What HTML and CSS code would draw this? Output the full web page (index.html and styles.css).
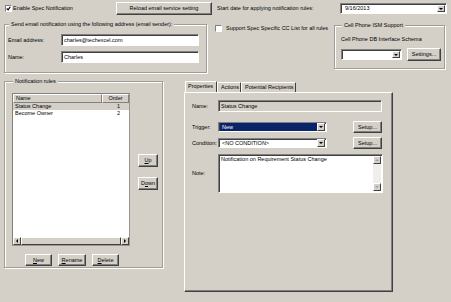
FILE: index.html
```html
<!DOCTYPE html>
<html lang="en">
<head>
  <meta charset="UTF-8">
  <title>Spec Notification Settings</title>
  <link rel="stylesheet" href="styles.css">
</head>
<body>
  <div class="dialog">
    <!-- top line -->
    <div class="top-row">
      <div class="check enable">
        <span class="box"><svg width="5" height="5" viewBox="0 0 7 7"><path d="M1 3.5 L3 5.5 L6 1" stroke="#000" stroke-width="1.6" fill="none"/></svg></span>
        <span>Enable Spec Notification</span>
      </div>
      <button class="btn reload">Reload email service setting</button>
      <span class="start-label">Start date for applying notification rules:</span>
      <div class="combo date">
        <span class="combo-text">9/16/2013</span>
        <span class="drop"></span>
      </div>
    </div>

    <!-- sender, cc list, cell phone -->
    <div class="mid-row">
      <fieldset class="group sender">
        <legend>Send email notification using the following address (email sender):</legend>
        <div class="field-row">
          <span class="lbl">Email address:</span>
          <div class="input">charles@techexcel.com</div>
        </div>
        <div class="field-row">
          <span class="lbl">Name:</span>
          <div class="input">Charles</div>
        </div>
      </fieldset>

      <div class="check cc">
        <span class="box"></span>
        <span>Support Spec Specific CC List for all rules</span>
      </div>

      <fieldset class="group ism">
        <legend>Cell Phone ISM Support</legend>
        <div>Cell Phone DB Interface Schema</div>
        <div class="ism-row">
          <div class="combo schema">
            <span class="combo-text"></span>
            <span class="drop"></span>
          </div>
          <button class="btn settings">Settings...</button>
        </div>
      </fieldset>
    </div>

    <!-- rules list and properties -->
    <div class="bottom-row">
      <fieldset class="group rules">
        <legend>Notification rules</legend>
        <div class="rules-body">
          <div class="list">
            <div class="list-head">
              <span class="hcell col-name">Name</span>
              <span class="hcell col-order">Order</span>
            </div>
            <div class="list-row sel">
              <span class="col-name">Status Change</span>
              <span class="col-order">1</span>
            </div>
            <div class="list-row">
              <span class="col-name">Become Owner</span>
              <span class="col-order">2</span>
            </div>
            <div class="list-fill"></div>
            <div class="hscroll">
              <span class="sb-btn"><span class="arr left"></span></span>
              <span class="sb-thumb"></span>
              <span class="sb-btn"><span class="arr right"></span></span>
            </div>
          </div>
          <div class="side-btns">
            <button class="btn move"><u>U</u>p</button>
            <button class="btn move">D<u>o</u>wn</button>
          </div>
        </div>
        <div class="rule-btns">
          <button class="btn small"><u>N</u>ew</button>
          <button class="btn small wide"><u>R</u>ename</button>
          <button class="btn small"><u>D</u>elete</button>
        </div>
      </fieldset>

      <div class="tabs">
        <div class="tab-strip">
          <span class="tab active">Properties</span>
          <span class="tab actions">Actions</span>
          <span class="tab recipients">Potential Recipients</span>
        </div>
        <div class="panel">
          <div class="prop-row">
            <span class="plbl">Name:</span>
            <div class="input readonly">Status Change</div>
          </div>
          <div class="prop-row trigger">
            <span class="plbl">Trigger:</span>
            <div class="combo rule-combo">
              <span class="combo-text sel">New</span>
              <span class="drop"></span>
            </div>
            <button class="btn setup">Setup...</button>
          </div>
          <div class="prop-row condition">
            <span class="plbl">Condition:</span>
            <div class="combo rule-combo">
              <span class="combo-text">&lt;NO CONDITION&gt;</span>
              <span class="drop"></span>
            </div>
            <button class="btn setup">Setup...</button>
          </div>
          <div class="prop-row note-row">
            <span class="plbl">Note:</span>
            <div class="note">
              <div class="note-text">Notification on Requirement Status Change</div>
              <div class="vscroll">
                <span class="sb-btn"><span class="arr up"></span></span>
                <span class="vs-track"></span>
                <span class="sb-btn"><span class="arr down"></span></span>
              </div>
            </div>
          </div>
        </div>
      </div>
    </div>
  </div>
</body>
</html>
```

FILE: styles.css
```css
* {
  box-sizing: border-box;
}
body {
  margin: 0;
  width: 451px;
  height: 302px;
  overflow: hidden;
  background-color: #d4d0c8;
  font-family: "Liberation Sans", Arial, sans-serif;
  font-size: 5.5px;
  line-height: 7px;
  color: #000;
}
.dialog {
  padding: 2px 0 0 4px;
}
u {
  text-decoration: underline;
}

/* shared controls */
.btn {
  display: flex;
  align-items: center;
  justify-content: center;
  padding: 0;
  background-color: #d4d0c8;
  border: 1px solid;
  border-color: #fff #404040 #404040 #fff;
  box-shadow: inset -1px -1px 0 #808080;
  font: inherit;
  color: #000;
  white-space: nowrap;
}
.check {
  display: flex;
  align-items: center;
  white-space: nowrap;
}
.box {
  display: flex;
  align-items: center;
  justify-content: center;
  width: 7px;
  height: 7px;
  margin-right: 1px;
  background-color: #fff;
  border: 1px solid;
  border-color: #808080 #fff #fff #808080;
}
.input {
  height: 12px;
  padding-left: 2px;
  line-height: 10px;
  background-color: #fff;
  border: 1px solid;
  border-color: #808080 #fff #fff #808080;
  box-shadow: inset 1px 1px 0 #404040;
  white-space: nowrap;
}
.input.readonly {
  width: 164px;
  background-color: #d4d0c8;
}
.combo {
  display: flex;
  background-color: #fff;
  border: 1px solid;
  border-color: #808080 #fff #fff #808080;
  box-shadow: inset 1px 1px 0 #404040;
  padding: 1px 1px 1px 1px;
}
.combo-text {
  flex: 1;
  padding-left: 2px;
  white-space: nowrap;
  overflow: hidden;
}
.combo-text.sel {
  background-color: #0a246a;
  color: #fff;
}
.drop {
  display: flex;
  align-items: center;
  justify-content: center;
  width: 8px;
  background-color: #d4d0c8;
  border: 1px solid;
  border-color: #fff #404040 #404040 #fff;
}
.drop::after {
  content: "";
  border-left: 2px solid transparent;
  border-right: 2px solid transparent;
  border-top: 2px solid #000;
}
.group {
  margin: 0;
  padding: 0;
  min-width: 0;
  border: 1px solid #a19d95;
  box-shadow: 1px 1px 0 #fff, inset 1px 1px 0 #fff;
}
.group legend {
  margin-left: 1px;
  padding: 0 2px;
  line-height: 7px;
  background-color: #d4d0c8;
  white-space: nowrap;
}

/* top line */
.top-row {
  display: flex;
  align-items: center;
  height: 13px;
}
.check.enable {
  width: 112px;
  padding-left: 1px;
}
.reload {
  width: 96px;
  height: 13px;
}
.start-label {
  width: 123px;
  margin-left: 5px;
  white-space: nowrap;
}
.combo.date {
  width: 107px;
  height: 11px;
}
.combo.date .combo-text {
  padding-left: 3px;
}

/* middle */
.mid-row {
  display: flex;
  align-items: flex-start;
  margin-top: 6px;
}
.sender {
  width: 203px;
  height: 52px;
  padding: 6px 0 0 3px;
}
.field-row {
  display: flex;
  align-items: center;
  height: 12px;
}
.field-row + .field-row {
  margin-top: 5px;
}
.lbl {
  width: 53px;
}
.field-row .input {
  width: 138px;
}
.check.cc {
  width: 119px;
  margin: 4px 0 0 8px;
}
.check.cc .box {
  margin-right: 4px;
}
.ism {
  width: 111px;
  height: 47px;
  margin-top: 1px;
  padding: 7px 0 0 6px;
}
.ism-row {
  display: flex;
  align-items: center;
  margin-top: 5px;
}
.combo.schema {
  width: 61px;
  height: 11px;
}
.settings {
  width: 34px;
  height: 13px;
  margin-left: 5px;
}

/* rules */
.bottom-row {
  display: flex;
  align-items: flex-start;
  margin-top: 5px;
}
.rules {
  width: 159px;
  height: 190px;
  padding: 8px 0 0 7px;
}
.rules-body {
  display: flex;
}
.list {
  display: flex;
  flex-direction: column;
  width: 118px;
  height: 153px;
  background-color: #fff;
  border: 1px solid;
  border-color: #808080 #9a968f #9a968f #808080;
}
.list-head {
  display: flex;
  height: 9px;
}
.hcell {
  height: 9px;
  line-height: 7px;
  background-color: #d4d0c8;
  border: 1px solid;
  border-color: #fff #808080 #808080 #fff;
}
.col-name {
  width: 89px;
  padding-left: 2px;
}
.col-order {
  width: 27px;
  text-align: right;
  padding-right: 9px;
}
.hcell.col-order {
  text-align: center;
  padding-right: 0;
}
.list-row {
  display: flex;
  height: 7px;
}
.list-row.sel {
  background-color: #d4d0c8;
}
.list-fill {
  flex: 1;
}
.hscroll {
  display: flex;
  height: 8px;
}
.sb-btn {
  display: flex;
  align-items: center;
  justify-content: center;
  width: 8px;
  height: 8px;
  background-color: #d4d0c8;
  border: 1px solid;
  border-color: #fff #404040 #404040 #fff;
}
.sb-thumb {
  flex: 1;
  background-color: #d4d0c8;
  border: 1px solid;
  border-color: #fff #404040 #404040 #fff;
}
.arr {
  width: 0;
  height: 0;
}
.arr.left {
  border-top: 2px solid transparent;
  border-bottom: 2px solid transparent;
  border-right: 2px solid #000;
}
.arr.right {
  border-top: 2px solid transparent;
  border-bottom: 2px solid transparent;
  border-left: 2px solid #000;
}
.arr.up {
  border-left: 2px solid transparent;
  border-right: 2px solid transparent;
  border-bottom: 2px solid #a0a0a0;
}
.arr.down {
  border-left: 2px solid transparent;
  border-right: 2px solid transparent;
  border-top: 2px solid #a0a0a0;
}
.side-btns {
  display: flex;
  flex-direction: column;
  gap: 10px;
  margin-left: 8px;
  padding-top: 61px;
}
.move {
  width: 20px;
  height: 13px;
}
.rule-btns {
  display: flex;
  gap: 6px;
  margin: 8px 0 0 13px;
}
.small {
  width: 27px;
  height: 12px;
}
.small.wide {
  width: 28px;
}

/* properties tabs */
.tabs {
  width: 209px;
  margin: 3px 0 0 21px;
}
.tab-strip {
  display: flex;
  align-items: flex-end;
  height: 11px;
  padding-left: 1px;
}
.tab {
  height: 10px;
  padding-left: 3px;
  line-height: 8px;
  border: 1px solid;
  border-bottom: none;
  border-color: #fff #404040 transparent #fff;
  border-radius: 1px 1px 0 0;
  white-space: nowrap;
}
.tab.active {
  width: 32px;
  height: 11px;
  line-height: 9px;
  padding-left: 2px;
}
.tab.actions {
  width: 24px;
}
.tab.recipients {
  width: 55px;
}
.panel {
  height: 200px;
  padding: 7px 0 0 7px;
  border: 1px solid;
  border-color: #fff #404040 #404040 #fff;
  box-shadow: inset -1px -1px 0 #808080;
}
.prop-row {
  display: flex;
  align-items: center;
}
.plbl {
  width: 26px;
  white-space: nowrap;
}
.prop-row.trigger {
  height: 12px;
  margin-top: 9px;
}
.prop-row.condition {
  height: 12px;
  margin-top: 4px;
}
.combo.rule-combo {
  width: 109px;
  height: 10px;
  padding: 0 1px 0 1px;
}
.combo.rule-combo .combo-text {
  line-height: 8px;
}
.setup {
  width: 29px;
  height: 12px;
  margin-left: 26px;
}
.prop-row.note-row {
  margin-top: 5px;
}
.note {
  display: flex;
  width: 165px;
  height: 39px;
  background-color: #fff;
  border: 1px solid;
  border-color: #808080 #fff #fff #808080;
  box-shadow: inset 1px 1px 0 #404040;
  padding: 1px 1px 1px 1px;
}
.note-text {
  flex: 1;
  padding-left: 1px;
}
.vscroll {
  display: flex;
  flex-direction: column;
  width: 8px;
}
.vs-track {
  flex: 1;
  background-color: #efeeeb;
}
```
